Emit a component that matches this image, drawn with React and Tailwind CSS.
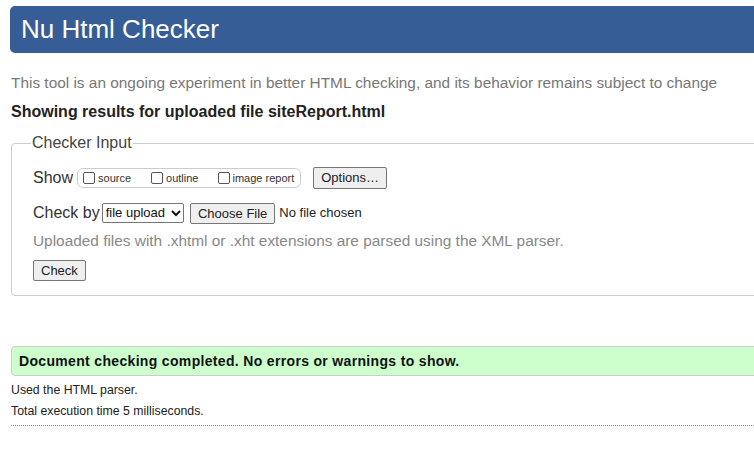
export default function App() {
  return (
    <div className="w-[754px] h-[455px] overflow-hidden bg-white text-[#333] font-['Liberation_Sans',Arial,sans-serif]">
      <div className="w-[800px] pl-[10px] pt-[6px]">
        <h1 className="h-[47px] bg-[#365d95] rounded-[5px] text-white text-[26px] leading-[47px] pl-[11px]">
          Nu Html Checker
        </h1>

        <p className="mt-[20px] text-[15.4px] leading-[20px] text-[#777] pl-[1px]">
          This tool is an ongoing experiment in better HTML checking, and its behavior remains subject to change
        </p>
        <p className="mt-[9px] text-[16px] leading-[20px] font-bold text-[#222] pl-[1px]">
          Showing results for uploaded file siteReport.html
        </p>

        <fieldset className="mt-[12px] ml-[1px] border border-[#ccc] rounded-[4px] px-[21px] pb-[13px] pt-[14px]">
          <legend className="px-[1px] ml-[-2px] text-[16px] leading-[18px] text-[#444]">Checker Input</legend>

          <div className="flex items-center h-[22px] mt-[1px]">
            <span className="text-[16px] text-[#333] mr-[4px]">Show</span>
            <div className="flex items-center h-[20px] border border-[#ccc] rounded-[6px] pl-[5px] pr-[6px] text-[11px] text-[#333]">
              <label className="flex items-center mr-[20px]">
                <span className="inline-block w-[12px] h-[12px] border border-[#555] rounded-[2px] mr-[3px]" />
                source
              </label>
              <label className="flex items-center mr-[20px]">
                <span className="inline-block w-[12px] h-[12px] border border-[#555] rounded-[2px] mr-[3px]" />
                outline
              </label>
              <label className="flex items-center">
                <span className="inline-block w-[12px] h-[12px] border border-[#555] rounded-[2px] mr-[2px]" />
                image report
              </label>
            </div>
            <button className="ml-[12px] h-[22px] px-[7px] border border-[#767676] rounded-[2px] bg-[#efefef] text-[13px] text-[#222]">
              Options…
            </button>
          </div>

          <div className="flex items-center h-[22px] mt-[13px]">
            <span className="text-[16px] text-[#333] mr-[2px]">Check by</span>
            <div className="flex items-center h-[20px] border border-[#767676] rounded-[2px] pl-[3px] pr-[2px] text-[13px] text-[#111]">
              file upload
              <svg width="10" height="8" viewBox="0 0 10 8" className="ml-[6px]">
                <path d="M1 2l4 4 4-4" stroke="#111" strokeWidth="2" fill="none" />
              </svg>
            </div>
            <button className="ml-[6px] h-[21px] px-[7px] border border-[#767676] rounded-[2px] bg-[#efefef] text-[13px] text-[#222]">
              Choose File
            </button>
            <span className="ml-[4px] text-[13px] text-[#222]">No file chosen</span>
          </div>

          <p className="mt-[7px] text-[15.4px] leading-[20px] text-[#888]">
            Uploaded files with .xhtml or .xht extensions are parsed using the XML parser.
          </p>

          <button className="mt-[9px] h-[21px] px-[7px] border border-[#767676] rounded-[2px] bg-[#efefef] text-[13px] text-[#222]">
            Check
          </button>
        </fieldset>

        <div className="mt-[50px] ml-[1px] h-[30px] bg-[#ccffcc] border border-[#ccc] rounded-[4px] pl-[7px] flex items-center">
          <span className="text-[14px] font-bold text-[#111] tracking-[0.33px]">
            Document checking completed. No errors or warnings to show.
          </span>
        </div>

        <p className="mt-[7px] ml-[1px] text-[12.3px] leading-[15px] text-[#222]">Used the HTML parser.</p>
        <p className="mt-[6px] ml-[1px] text-[12.3px] leading-[15px] text-[#222]">Total execution time 5 milliseconds.</p>
        <div className="mt-[6px] ml-[1px] border-t border-dotted border-[#888]" />
      </div>
    </div>
  );
}
